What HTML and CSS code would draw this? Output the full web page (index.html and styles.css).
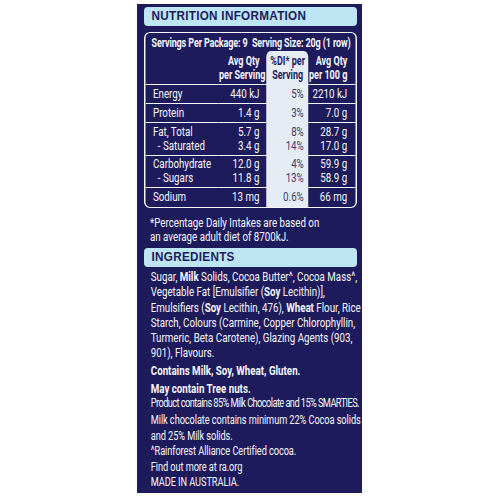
FILE: index.html
```html
<!DOCTYPE html>
<html lang="en">
<head>
  <meta charset="UTF-8" />
  <title>Nutrition Information</title>
  <link rel="stylesheet" href="styles.css">
</head>
<body>
  <div class="panel">
    <div class="inner">
      <h2 class="bar"><span>NUTRITION INFORMATION</span></h2>

      <div class="nip">
        <div class="serv">Servings Per Package: 9 &nbsp;Serving Size: 20g (1 row)</div>
        <table>
          <colgroup>
            <col class="c-lbl"><col class="c-val"><col class="c-di"><col class="c-per">
          </colgroup>
          <tr class="head">
            <td class="lbl"></td>
            <td class="val">Avg Qty<br>per Serving</td>
            <td class="di">%DI* per<br>Serving</td>
            <td class="val per">Avg Qty<br>per 100 g</td>
          </tr>
          <tr>
            <td class="lbl">Energy</td>
            <td class="val">440 kJ</td>
            <td class="di">5%</td>
            <td class="val per">2210 kJ</td>
          </tr>
          <tr>
            <td class="lbl">Protein</td>
            <td class="val">1.4 g</td>
            <td class="di">3%</td>
            <td class="val per">7.0 g</td>
          </tr>
          <tr class="two">
            <td class="lbl">Fat, Total<br>&nbsp;&nbsp;- Saturated</td>
            <td class="val">5.7 g<br>3.4 g</td>
            <td class="di">8%<br>14%</td>
            <td class="val per">28.7 g<br>17.0 g</td>
          </tr>
          <tr class="two">
            <td class="lbl">Carbohydrate<br>&nbsp;&nbsp;- Sugars</td>
            <td class="val">12.0 g<br>11.8 g</td>
            <td class="di">4%<br>13%</td>
            <td class="val per">59.9 g<br>58.9 g</td>
          </tr>
          <tr class="last">
            <td class="lbl">Sodium</td>
            <td class="val">13 mg</td>
            <td class="di">0.6%</td>
            <td class="val per">66 mg</td>
          </tr>
        </table>
      </div>

      <p class="note">*Percentage Daily Intakes are based on<br>an average adult diet of 8700kJ.</p>

      <h2 class="bar ingr-bar"><span>INGREDIENTS</span></h2>

      <p class="ingr">Sugar, <b>Milk</b> Solids, Cocoa Butter^, Cocoa Mass^,<br>Vegetable Fat [Emulsifier (<b>Soy</b> Lecithin)],<br>Emulsifiers (<b>Soy</b> Lecithin, 476), <b>Wheat</b> Flour, Rice<br>Starch, Colours (Carmine, Copper Chlorophyllin,<br>Turmeric, Beta Carotene), Glazing Agents (903,<br>901), Flavours.</p>
      <p class="warn">Contains Milk, Soy, Wheat, Gluten.</p>
      <p class="warn">May contain Tree nuts.</p>
      <p class="info tight">Product contains 85% Milk Chocolate and 15% SMARTIES.</p>
      <p class="info">Milk chocolate contains minimum 22% Cocoa solids<br>and 25% Milk solids.<br>^Rainforest Alliance Certified cocoa.<br>Find out more at ra.org<br>MADE IN AUSTRALIA.</p>
    </div>
  </div>
</body>
</html>
```

FILE: styles.css
```css
body {
  margin: 0;
  background: #fff;
  font-family: Roboto, "Liberation Sans", sans-serif;
}

/* navy label panel */
.panel {
  width: 225px;
  height: 489px;
  margin: 4px 0 0 137px;
  padding: 3px 5px 0 7px;
  box-sizing: border-box;
  background: #1e1b5d;
  color: #f6f6fa;
  overflow: hidden;
}

/* the print uses a condensed face, so squeeze the content box */
.inner {
  width: 284px;
  transform: scaleX(0.75);
  transform-origin: 0 0;
  white-space: nowrap;
}

.bar {
  margin: 0;
  height: 19px;
  padding-left: 10px;
  background: #bde5f4;
  color: #1e1b5d;
  border-radius: 5px / 4px;
  font-family: "Liberation Sans", sans-serif;
  font-size: 12px;
  font-weight: bold;
  line-height: 19px;
}

.bar span {
  display: inline-block;
  transform: scaleX(1.3);
  transform-origin: 0 50%;
  letter-spacing: 0.3px;
}

.ingr-bar {
  margin-top: 4px;
}

.nip {
  margin-top: 6px;
  border: 1.5px solid #f6f6fa;
  border-left-width: 2px;
  border-right-width: 2px;
  border-radius: 8px / 6px;
  overflow: hidden;
}

.serv {
  height: 15px;
  padding: 3px 0 0 8px;
  font-size: 12px;
  font-weight: bold;
  letter-spacing: -0.15px;
  line-height: 15px;
}

table {
  width: 100%;
  table-layout: fixed;
  border-collapse: collapse;
  font-size: 13px;
  line-height: 14px;
}

.c-lbl { width: 97px; }
.c-val { width: 64px; }
.c-di { width: 56px; }
.c-per { width: 64px; }

td {
  padding-top: 2px;
  padding-bottom: 2px;
  vertical-align: top;
  border-bottom: 1.5px solid #f6f6fa;
}

tr.head td {
  font-size: 12px;
  font-weight: bold;
  padding-top: 3px;
}

tr.two td {
  padding-top: 1.5px;
}

tr.last td {
  border-bottom: none;
  padding-bottom: 3px;
}

.lbl {
  padding-left: 10px;
}

.val {
  text-align: right;
  padding-right: 9px;
}

.di {
  text-align: right;
  padding-right: 6px;
  background: #e6ecf3;
  color: #3c3b6e;
  border-bottom-color: #e6ecf3;
}

tr.head .di {
  text-align: center;
  padding-right: 0;
  color: #1e1b5d;
  border-radius: 6px 6px 0 0;
}

.val.per {
  padding-right: 12px;
}

p {
  margin: 0;
  font-size: 13px;
  line-height: 15.3px;
}

.note {
  padding: 8px 0 0 8px;
  line-height: 14px;
}

.ingr {
  padding: 2px 0 0 9px;
}

.warn {
  padding: 2.5px 0 0 9px;
  font-weight: bold;
}

.info {
  padding: 1px 0 0 9px;
  font-size: 12.3px;
  line-height: 15.6px;
  letter-spacing: -0.1px;
}

.info.tight {
  padding-top: 0;
  letter-spacing: -0.75px;
}
```
